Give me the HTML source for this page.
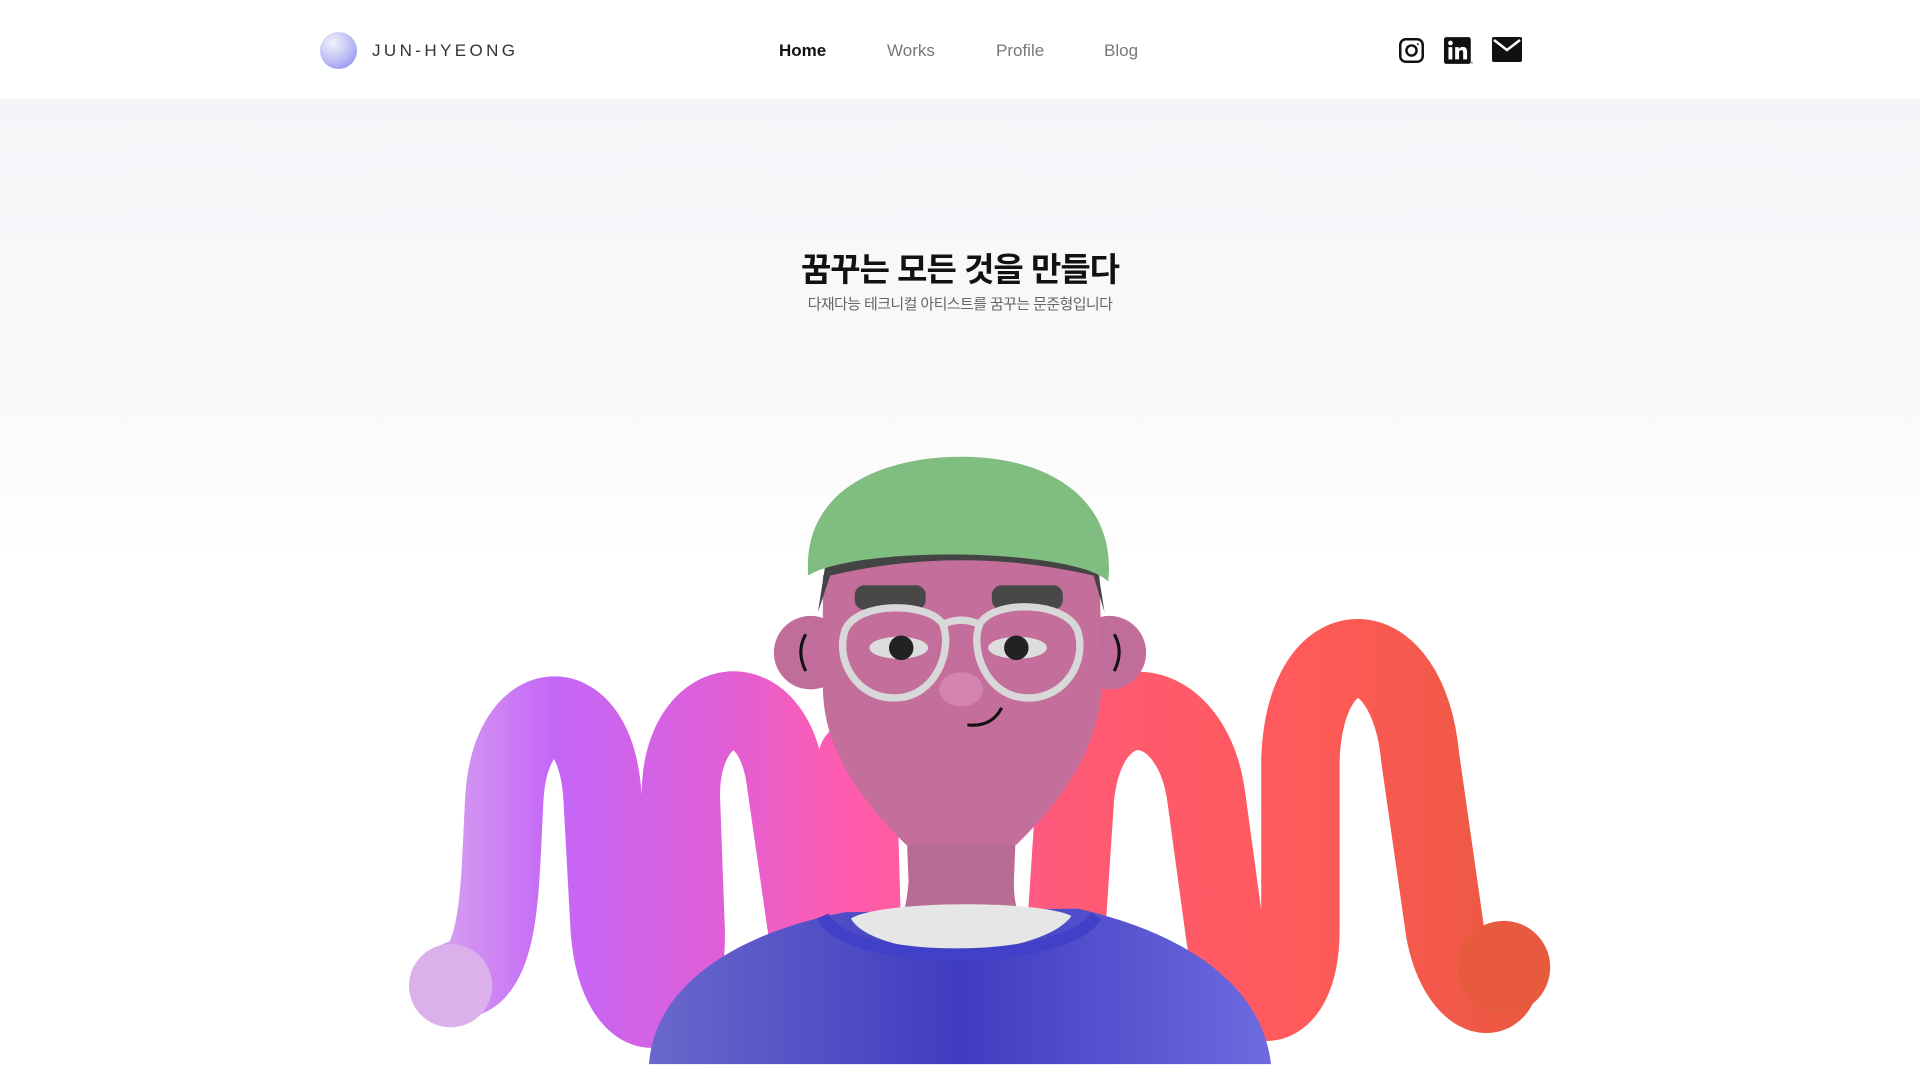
<!DOCTYPE html>
<html><head><meta charset="utf-8"><style>
*{margin:0;padding:0;box-sizing:border-box}
body{width:1920px;height:1080px;overflow:hidden;font-family:"Liberation Sans","Noto Sans CJK KR",sans-serif;background:linear-gradient(#f4f5f8 100px,#fbfbfc 450px,#fff 560px)}
header{height:99px;background:#fff;position:relative}
.logo{position:absolute;left:320px;top:32px;width:37px;height:37px;border-radius:50%;background:radial-gradient(circle at 35% 30%,#f2f2fb,#b9baf2 55%,#7d7ef0)}
.brand{position:absolute;left:372px;top:41px;font-size:17px;letter-spacing:3.4px;color:#333}
nav a{position:absolute;top:41px;font-size:17px;color:#777;text-decoration:none}
.ic{position:absolute;top:37px}
h1{position:absolute;top:243px;width:100%;text-align:center;font-size:33px;font-weight:bold;color:#111;letter-spacing:-1px}
p.s{position:absolute;top:293px;width:100%;text-align:center;font-size:15px;color:#666;letter-spacing:-0.6px}
svg.art{position:absolute;left:0;top:0}
</style></head><body>
<header>
<div class="logo"></div><div class="brand">JUN-HYEONG</div>
<nav><a style="left:779px;color:#111;font-weight:bold">Home</a><a style="left:887px">Works</a><a style="left:996px">Profile</a><a style="left:1104px">Blog</a></nav>
<svg class="ic" style="left:1398px" width="27" height="27" viewBox="0 0 24 24" fill="none" stroke="#111" stroke-width="2.2"><rect x="2" y="2" width="20" height="20" rx="5"/><circle cx="12" cy="12" r="4.5"/><circle cx="17.6" cy="6.4" r="0.8" fill="#111" stroke="none"/></svg>
<svg class="ic" style="left:1444px" width="29" height="27" viewBox="0 0 26 24"><rect x="0" y="0" width="24" height="24" rx="2" fill="#111"/><rect x="4" y="9" width="3.5" height="11" fill="#fff"/><circle cx="5.8" cy="5.3" r="2.1" fill="#fff"/><path d="M10 9h3.3v1.6c.7-1.2 2-1.9 3.6-1.9 2.8 0 3.8 1.8 3.8 4.6V20h-3.5v-6c0-1.4-.4-2.3-1.7-2.3s-2 .9-2 2.3v6H10z" fill="#fff"/><circle cx="25" cy="23" r="0.9" fill="#999"/></svg>
<svg class="ic" style="left:1492px" width="30" height="25" viewBox="0 0 30 25"><rect x="0" y="0" width="30" height="25" rx="2" fill="#111"/><path d="M2 3l13 10 13-10" fill="none" stroke="#fff" stroke-width="2.5"/></svg>
</header>
<h1>꿈꾸는 모든 것을 만들다</h1>
<p class="s">다재다능 테크니컬 아티스트를 꿈꾸는 문준형입니다</p>
<svg class="art" width="1920" height="1080" viewBox="0 0 1568 882">
<defs>
<linearGradient id="tg" gradientUnits="userSpaceOnUse" x1="330" y1="0" x2="1270" y2="0">
<stop offset="0" stop-color="#dcb2ec"/><stop offset=".13" stop-color="#c466f8"/><stop offset=".27" stop-color="#de5fd8"/><stop offset=".38" stop-color="#ff5cb0"/><stop offset=".6" stop-color="#ff5a72"/><stop offset=".78" stop-color="#ff5a5a"/><stop offset="1" stop-color="#e8583c"/></linearGradient>
<linearGradient id="sh" x1="0" y1="0" x2="1" y2="0"><stop offset="0" stop-color="#6a68cc"/><stop offset=".5" stop-color="#3f3cc0"/><stop offset="1" stop-color="#6e6ae0"/></linearGradient>
</defs>
<g fill="none" stroke="url(#tg)" stroke-width="64" stroke-linecap="round">
<path d="M375 800 C410 795 408 720 412 650 C418 565 486 560 492 650 L498 760 C505 845 562 845 560 760 L556 650 C556 565 632 553 642 640 L665 800"/>
<path d="M700 620 L705 800"/>
<path d="M868 800 L878 650 C888 555 972 560 985 650 L1000 760 C1010 840 1062 835 1062 760 L1062 620 C1066 510 1150 510 1160 620 L1180 760 C1190 815 1225 825 1225 795"/>
</g>
<circle cx="368" cy="805" r="34" fill="#dcb0ea"/>
<circle cx="1228" cy="790" r="38" fill="#e85a3e"/>
<path d="M738 620 L742 720 C740 745 735 755 730 760 L840 760 C832 750 828 740 828 720 L832 620 Z" fill="#b86b94"/>
<path d="M530 869 C535 800 610 760 690 745 L880 742 C960 760 1030 800 1038 869 Z" fill="url(#sh)"/>
<path d="M695 750 C720 735 850 735 875 748 C860 770 800 778 785 778 C760 778 705 770 695 750 Z" fill="#e6e6e6"/>
<path d="M672 748 C690 790 870 790 895 748" fill="none" stroke="#4140c8" stroke-width="10"/>
<circle cx="662" cy="533" r="30" fill="#c06d9c"/><circle cx="906" cy="533" r="30" fill="#c06d9c"/>
<path d="M658 518 Q650 532 658 548 M910 518 Q918 532 910 548" fill="none" stroke="#111" stroke-width="2.5"/>
<path d="M672 470 Q785 430 898 470 L900 560 C896 620 860 660 830 690 L740 690 C702 652 672 612 672 560 Z" fill="#c46e9c"/>
<path d="M668 500 L675 455 Q785 430 895 455 L902 500 L893 470 Q785 445 678 470 Z" fill="#444"/>
<path d="M660 470 C655 400 720 373 785 373 C860 373 912 410 905 475 C880 448 700 445 660 470 Z" fill="#7fbe80"/>
<rect x="698" y="478" width="58" height="20" rx="8" fill="#484848"/><rect x="810" y="478" width="58" height="20" rx="8" fill="#484848"/>
<ellipse cx="734" cy="529" rx="24" ry="9" fill="#ddd"/><ellipse cx="831" cy="529" rx="24" ry="9" fill="#ddd"/>
<circle cx="736" cy="529" r="10" fill="#222"/><circle cx="830" cy="529" r="10" fill="#222"/>
<ellipse cx="785" cy="563" rx="18" ry="14" fill="#d283ae"/>
<g fill="none" stroke="#d8d8d8" stroke-width="6"><path d="M690 515 C700 490 760 492 770 510 C778 530 765 570 730 570 C700 570 682 540 690 515 Z"/><path d="M800 510 C810 490 870 490 880 515 C888 540 870 570 840 570 C805 570 792 530 800 510 Z"/><path d="M770 510 Q785 503 800 510"/></g>
<path d="M790 592 Q810 594 818 578" fill="none" stroke="#111" stroke-width="2.5"/>
</svg>
</body></html>
